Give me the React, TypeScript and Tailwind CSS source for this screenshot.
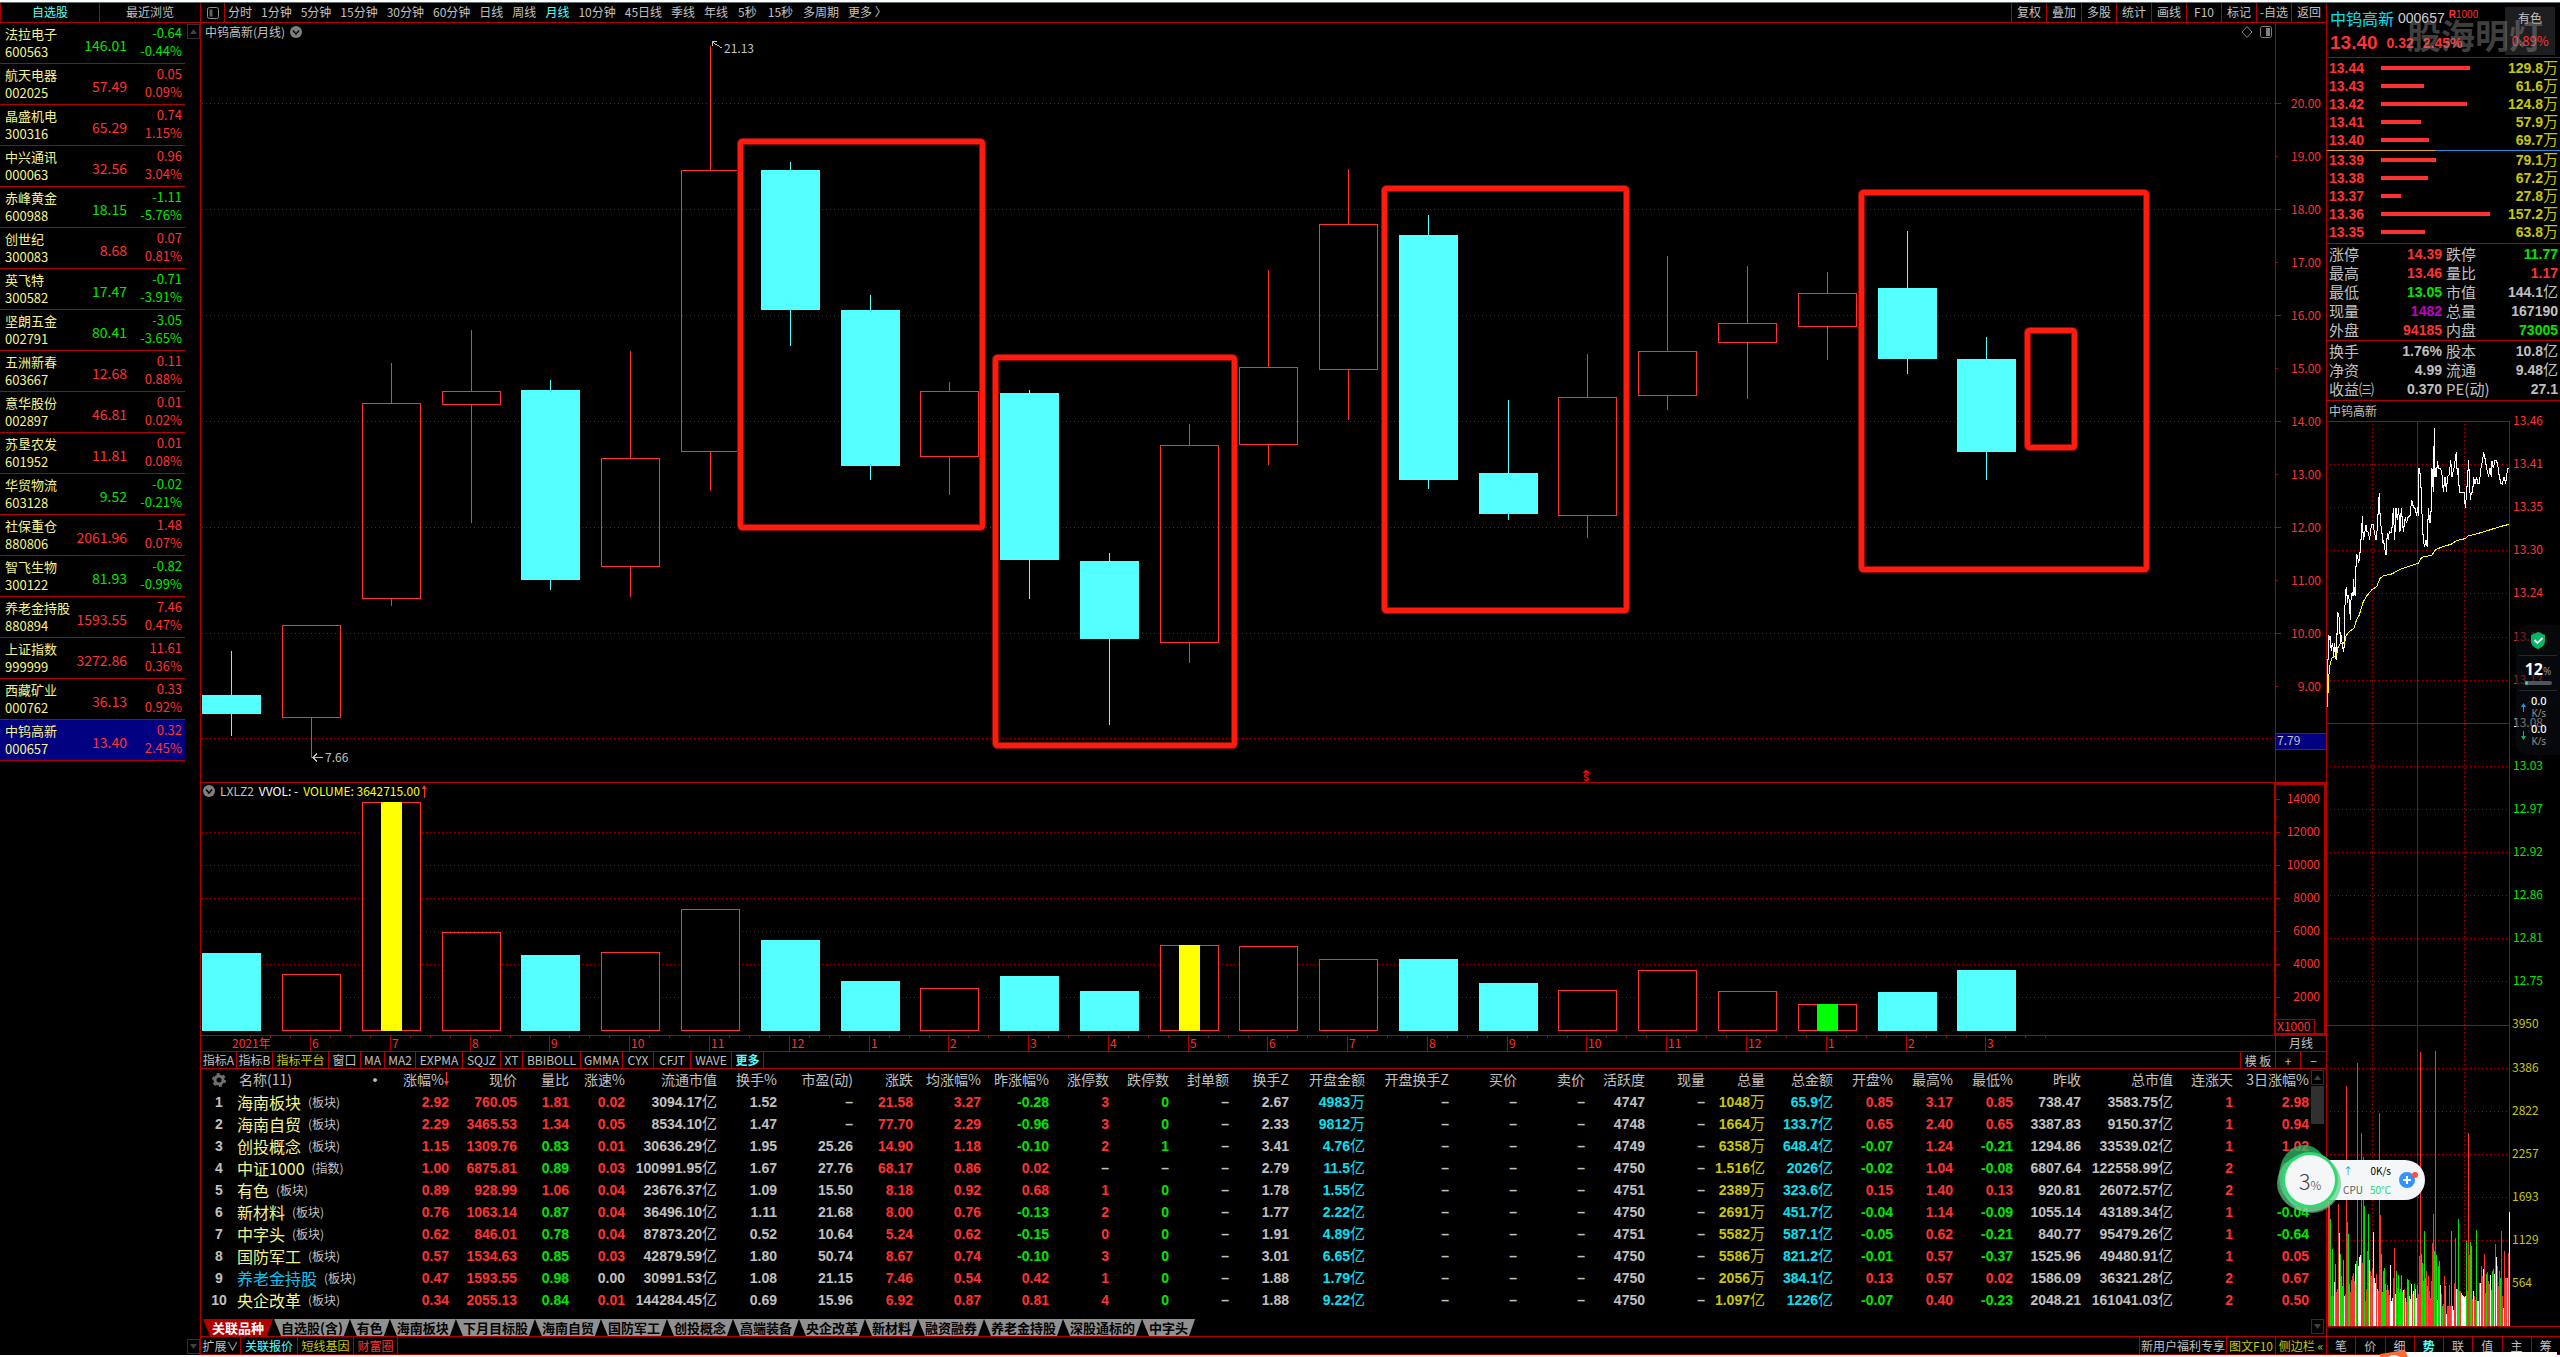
import clsx from "clsx";

const watchlist = [
  { name: "法拉电子", code: "600563", price: "146.01", change: "-0.64", percent: "-0.44%" },
  { name: "航天电器", code: "002025", price: "57.49", change: "0.05", percent: "0.09%" },
  { name: "晶盛机电", code: "300316", price: "65.29", change: "0.74", percent: "1.15%" },
  { name: "中兴通讯", code: "000063", price: "32.56", change: "0.96", percent: "3.04%" },
  { name: "赤峰黄金", code: "600988", price: "18.15", change: "-1.11", percent: "-5.76%" },
  { name: "创世纪", code: "300083", price: "8.68", change: "0.07", percent: "0.81%" },
  { name: "英飞特", code: "300582", price: "17.47", change: "-0.71", percent: "-3.91%" },
  { name: "坚朗五金", code: "002791", price: "80.41", change: "-3.05", percent: "-3.65%" },
  { name: "五洲新春", code: "603667", price: "12.68", change: "0.11", percent: "0.88%" },
  { name: "意华股份", code: "002897", price: "46.81", change: "0.01", percent: "0.02%" },
  { name: "苏垦农发", code: "601952", price: "11.81", change: "0.01", percent: "0.08%" },
  { name: "华贸物流", code: "603128", price: "9.52", change: "-0.02", percent: "-0.21%" },
  { name: "社保重仓", code: "880806", price: "2061.96", change: "1.48", percent: "0.07%" },
  { name: "智飞生物", code: "300122", price: "81.93", change: "-0.82", percent: "-0.99%" },
  { name: "养老金持股", code: "880894", price: "1593.55", change: "7.46", percent: "0.47%" },
  { name: "上证指数", code: "999999", price: "3272.86", change: "11.61", percent: "0.36%" },
  { name: "西藏矿业", code: "000762", price: "36.13", change: "0.33", percent: "0.92%" },
  { name: "中钨高新", code: "000657", price: "13.40", change: "0.32", percent: "2.45%" },
];

const periods = [
  "分时", "1分钟", "5分钟", "15分钟", "30分钟", "60分钟", "日线", "周线", "月线",
  "10分钟", "45日线", "季线", "年线", "5秒", "15秒", "多周期", "更多 〉",
];

const tools = ["复权", "叠加", "多股", "统计", "画线", "F10", "标记", "-自选", "返回"];

// [high, body top, body bottom, low, volume top], all in plot pixels
const candles: { up: boolean; k: number[]; vol: number; core?: string }[] = [
  { up: false, k: [628, 672, 691, 713], vol: 170 },
  { up: true, k: [602, 602, 695, 735], vol: 191 },
  { up: true, k: [340, 380, 576, 583], vol: 19, core: "#ffff00" },
  { up: true, k: [307, 368, 382, 500], vol: 149 },
  { up: false, k: [357, 367, 557, 567], vol: 172 },
  { up: true, k: [328, 435, 544, 574], vol: 169 },
  { up: true, k: [23, 147, 429, 468], vol: 126 },
  { up: false, k: [139, 147, 287, 323], vol: 157 },
  { up: false, k: [272, 287, 443, 457], vol: 198 },
  { up: true, k: [359, 368, 434, 472], vol: 205 },
  { up: false, k: [367, 370, 537, 576], vol: 193 },
  { up: false, k: [530, 538, 616, 702], vol: 208 },
  { up: true, k: [401, 422, 620, 640], vol: 162, core: "#ffff00" },
  { up: true, k: [247, 344, 422, 442], vol: 163 },
  { up: true, k: [146, 201, 347, 397], vol: 176 },
  { up: false, k: [192, 212, 457, 466], vol: 176 },
  { up: false, k: [377, 450, 491, 497], vol: 200 },
  { up: true, k: [331, 374, 493, 515], vol: 207 },
  { up: true, k: [233, 328, 373, 387], vol: 187 },
  { up: true, k: [243, 300, 320, 376], vol: 208 },
  { up: true, k: [249, 270, 304, 337], vol: 221, core: "#00ff00" },
  { up: false, k: [208, 265, 336, 351], vol: 209 },
  { up: false, k: [314, 336, 429, 457], vol: 187 },
];

const months = ["2021年", "6", "7", "8", "9", "10", "11", "12", "1", "2", "3", "4", "5", "6", "7", "8", "9", "10", "11", "12", "1", "2", "3"];

const marks = [
  { x: 539, y: 118, w: 242, h: 386 },
  { x: 794, y: 334, w: 239, h: 388 },
  { x: 1183, y: 165, w: 242, h: 422 },
  { x: 1660, y: 169, w: 285, h: 377 },
  { x: 1826, y: 307, w: 47, h: 117 },
];

const indicators = [
  { label: "指标A", width: "w-[36px]" },
  { label: "指标B", width: "w-[36px]" },
  { label: "指标平台", width: "w-[56px]", tone: "text-[#c8c800]" },
  { label: "窗口", width: "w-[32px]" },
  { label: "MA", width: "w-[24px]" },
  { label: "MA2", width: "w-[31px]" },
  { label: "EXPMA", width: "w-[47px]" },
  { label: "SQJZ", width: "w-[38px]" },
  { label: "XT", width: "w-[22px]" },
  { label: "BBIBOLL", width: "w-[58px]" },
  { label: "GMMA", width: "w-[42px]" },
  { label: "CYX", width: "w-[31px]" },
  { label: "CFJT", width: "w-[37px]" },
  { label: "WAVE", width: "w-[41px]" },
  { label: "更多", width: "w-[32px]", tone: "text-[#54ffff] font-bold" },
];

type Tone = "up" | "down" | "sign" | "ratio" | "plain" | "volume" | "amount";

const columns: { title: string; width: number; tone: Tone }[] = [
  { title: "涨幅%", width: 59, tone: "up" },
  { title: "现价", width: 68, tone: "up" },
  { title: "量比", width: 52, tone: "ratio" },
  { title: "涨速%", width: 56, tone: "sign" },
  { title: "流通市值", width: 92, tone: "plain" },
  { title: "换手%", width: 60, tone: "plain" },
  { title: "市盈(动)", width: 76, tone: "plain" },
  { title: "涨跌", width: 60, tone: "up" },
  { title: "均涨幅%", width: 68, tone: "up" },
  { title: "昨涨幅%", width: 68, tone: "sign" },
  { title: "涨停数", width: 60, tone: "up" },
  { title: "跌停数", width: 60, tone: "down" },
  { title: "封单额", width: 60, tone: "plain" },
  { title: "换手Z", width: 60, tone: "plain" },
  { title: "开盘金额", width: 76, tone: "amount" },
  { title: "开盘换手Z", width: 84, tone: "plain" },
  { title: "买价", width: 68, tone: "plain" },
  { title: "卖价", width: 68, tone: "plain" },
  { title: "活跃度", width: 60, tone: "plain" },
  { title: "现量", width: 60, tone: "plain" },
  { title: "总量", width: 60, tone: "volume" },
  { title: "总金额", width: 68, tone: "amount" },
  { title: "开盘%", width: 60, tone: "sign" },
  { title: "最高%", width: 60, tone: "sign" },
  { title: "最低%", width: 60, tone: "sign" },
  { title: "昨收", width: 68, tone: "plain" },
  { title: "总市值", width: 92, tone: "plain" },
  { title: "连涨天", width: 60, tone: "up" },
  { title: "3日涨幅%", width: 76, tone: "sign" },
];

const boards = [
  { name: "海南板块", kind: "板块", values: "2.92 760.05 1.81 0.02 3094.17亿 1.52 – 21.58 3.27 -0.28 3 0 – 2.67 4983万 – – – 4747 – 1048万 65.9亿 0.85 3.17 0.85 738.47 3583.75亿 1 2.98" },
  { name: "海南自贸", kind: "板块", values: "2.29 3465.53 1.34 0.05 8534.10亿 1.47 – 77.70 2.29 -0.96 3 0 – 2.33 9812万 – – – 4748 – 1664万 133.7亿 0.65 2.40 0.65 3387.83 9150.37亿 1 0.94" },
  { name: "创投概念", kind: "板块", values: "1.15 1309.76 0.83 0.01 30636.29亿 1.95 25.26 14.90 1.18 -0.10 2 1 – 3.41 4.76亿 – – – 4749 – 6358万 648.4亿 -0.07 1.24 -0.21 1294.86 33539.02亿 1 1.02" },
  { name: "中证1000", kind: "指数", values: "1.00 6875.81 0.89 0.03 100991.95亿 1.67 27.76 68.17 0.86 0.02 – – – 2.79 11.5亿 – – – 4750 – 1.516亿 2026亿 -0.02 1.04 -0.08 6807.64 122558.99亿 2 0.38" },
  { name: "有色", kind: "板块", values: "0.89 928.99 1.06 0.04 23676.37亿 1.09 15.50 8.18 0.92 0.68 1 0 – 1.78 1.55亿 – – – 4751 – 2389万 323.6亿 0.15 1.40 0.13 920.81 26072.57亿 2 0.42" },
  { name: "新材料", kind: "板块", values: "0.76 1063.14 0.87 0.04 36496.10亿 1.11 21.68 8.00 0.76 -0.13 2 0 – 1.77 2.22亿 – – – 4750 – 2691万 451.7亿 -0.04 1.14 -0.09 1055.14 43189.34亿 1 -0.04" },
  { name: "中字头", kind: "板块", values: "0.62 846.01 0.78 0.04 87873.20亿 0.52 10.64 5.24 0.62 -0.15 0 0 – 1.91 4.89亿 – – – 4751 – 5582万 587.1亿 -0.05 0.62 -0.21 840.77 95479.26亿 1 -0.64" },
  { name: "国防军工", kind: "板块", values: "0.57 1534.63 0.85 0.03 42879.59亿 1.80 50.74 8.67 0.74 -0.10 3 0 – 3.01 6.65亿 – – – 4750 – 5586万 821.2亿 -0.01 0.57 -0.37 1525.96 49480.91亿 1 0.05" },
  { name: "养老金持股", kind: "板块", values: "0.47 1593.55 0.98 0.00 30991.53亿 1.08 21.15 7.46 0.54 0.42 1 0 – 1.88 1.79亿 – – – 4750 – 2056万 384.1亿 0.13 0.57 0.02 1586.09 36321.28亿 2 0.67" },
  { name: "央企改革", kind: "板块", values: "0.34 2055.13 0.84 0.01 144284.45亿 0.69 15.96 6.92 0.87 0.81 4 0 – 1.88 9.22亿 – – – 4750 – 1.097亿 1226亿 -0.07 0.40 -0.23 2048.21 161041.03亿 2 0.50" },
];

const boardTabs = ["关联品种", "自选股(含)", "有色", "海南板块", "下月目标股", "海南自贸", "国防军工", "创投概念", "高端装备", "央企改革", "新材料", "融资融券", "养老金持股", "深股通标的", "中字头"];

const asks = [
  { price: "13.44", size: 89, amount: "129.8万" },
  { price: "13.43", size: 43, amount: "61.6万" },
  { price: "13.42", size: 86, amount: "124.8万" },
  { price: "13.41", size: 40, amount: "57.9万" },
  { price: "13.40", size: 48, amount: "69.7万" },
];

const bids = [
  { price: "13.39", size: 55, amount: "79.1万" },
  { price: "13.38", size: 47, amount: "67.2万" },
  { price: "13.37", size: 20, amount: "27.8万" },
  { price: "13.36", size: 109, amount: "157.2万" },
  { price: "13.35", size: 44, amount: "63.8万" },
];

const stats = [
  { label: "涨停", value: "14.39", tone: "text-[#ff3232]" },
  { label: "跌停", value: "11.77", tone: "text-[#00e600]" },
  { label: "最高", value: "13.46", tone: "text-[#ff3232]" },
  { label: "量比", value: "1.17", tone: "text-[#ff3232]" },
  { label: "最低", value: "13.05", tone: "text-[#00e600]" },
  { label: "市值", value: "144.1亿", tone: "text-[#c0c0c0]" },
  { label: "现量", value: "1482", tone: "text-[#c000c0]" },
  { label: "总量", value: "167190", tone: "text-[#c0c0c0]" },
  { label: "外盘", value: "94185", tone: "text-[#ff3232]" },
  { label: "内盘", value: "73005", tone: "text-[#00e600]" },
];

const fundamentals = [
  { label: "换手", value: "1.76%", tone: "text-[#c0c0c0]" },
  { label: "股本", value: "10.8亿", tone: "text-[#c0c0c0]" },
  { label: "净资", value: "4.99", tone: "text-[#c0c0c0]" },
  { label: "流通", value: "9.48亿", tone: "text-[#c0c0c0]" },
  { label: "收益㈢", value: "0.370", tone: "text-[#c0c0c0]" },
  { label: "PE(动)", value: "27.1", tone: "text-[#c0c0c0]" },
];

const intradayLabels = ["13.46", "13.41", "13.35", "13.30", "13.24", "13.19", "13.13", "13.08", "13.03", "12.97", "12.92", "12.86", "12.81", "12.75", "3950", "3386", "2822", "2257", "1693", "1129", "564"];

const priceLine =
  "382,905 383,820 386,705 389,720 390,708 394,752 397,728 399,740 401,768 404,730 406,778 408,740 410,780 412,635 416,645 419,660 421,730 424,705 427,735 431,755 434,720 434,640 437,572 440,562 442,610 444,585 448,600 451,660 453,600 457,575 459,588 461,538 463,580 466,585 468,500 470,465 473,468 476,490 480,460 482,430 485,400 487,348 490,420 494,400 498,375 501,395 505,397 509,420 511,398 515,373 519,373 523,395 528,420 531,395 534,345 538,278 541,370 545,385 548,430 551,420 553,440 558,465 562,400 565,420 568,395 575,398 580,325 584,420 588,325 592,360 596,325 600,395 604,325 610,395 616,350 619,370 625,350 630,348 635,300 640,320 645,325 650,348 653,320 655,348 657,205 662,230 665,320 670,420 674,442 678,420 682,442 685,325 690,370 694,325 696,205 700,277 703,85 705,230 708,205 710,230 712,182 716,205 722,205 727,230 730,277 735,230 740,277 742,230 748,225 752,180 756,230 762,205 769,157 772,225 775,205 778,277 793,277 796,325 800,277 803,230 806,180 811,300 814,277 818,277 821,230 825,252 830,230 833,250 838,250 843,205 848,180 851,157 856,180 860,205 866,230 870,205 874,230 876,182 880,205 885,182 890,182 895,205 898,230 903,250 907,252 912,230 917,252 920,225 924,205 928,205";
const averageLine =
  "382,920 385,860 388,805 395,775 410,765 413,745 420,732 434,728 437,710 445,697 462,685 470,658 478,645 490,605 500,588 515,570 530,560 540,535 550,528 575,522 600,508 655,490 665,472 695,466 708,448 730,440 755,432 770,422 795,416 805,408 850,396 900,380 928,373";

// one bar per minute: colour letter + height
const minuteVolume =
  "r125 r120 g107 r30 g77 r30 w44 g62 r34 r37 r122 w93 g72 g50 g40 g66 w30 r32 r240 r104 g92 g42 r34 r46 r50 r53 r45 w62 g65 r263 w60 w69 w71 r193 r63 r169 g120 r25 r37 r75 g112 w66 r55 g50 r58 w94 w48 w43 r52 w37 r35 r213 r111 g72 g34 g55 g58 g42 r36 g41 r36 g31 w61 w25 w28 r48 r78 w32 g55 r38 g51 g33 g37 g51 g34 w36 r37 w28 r24 g47 g46 w30 w27 w42 r32 w35 g42 w37 w28 g41 r32 r70 r274 g72 g63 r45 g95 g48 r55 g40 r50 r35 r28 r45 r83 r112 g75 r275 g71 w26 g60 g65 w41 r32 g20 r22 r50 g40 w12 r20 r20 r41 r20 g95 w20 w16 r42 r88 w37 g37 g107 g35 r35 w33 w31 w30 w29 w30 g85 r35 r193 r71 g84 g80 r27 w35 r30 r26 g96 w25 w25 g43 w43 r60 r50 w57 r72 r33 g52 r54 r45 r42 w51 g36 g55 r57 w52 r82 w69 r60 r40 r55 g48 r95 r30 w18 r75 g48 r48 w48 r73 w114".split(" ");

const barColors: Record<string, string> = { r: "#ff3232", g: "#00e600", w: "#ffffff" };

const sideTabs = ["笔", "价", "细", "势", "联", "值", "主", "筹"];

function toneClass(tone: Tone, value: string) {
  const n = parseFloat(value);
  if (value === "–" || tone === "plain") return "text-[#c0c0c0]";
  if (tone === "volume") return "text-[#c8c800]";
  if (tone === "amount") return "text-[#02e2f4]";
  if (tone === "down") return "text-[#00e600]";
  if (tone === "ratio") return n >= 1 ? "text-[#ff3232]" : "text-[#00e600]";
  if (tone === "sign" && n === 0) return "text-[#c0c0c0]";
  return n < 0 ? "text-[#00e600]" : "text-[#ff3232]";
}

function Num({ value }: { value: string }) {
  const unit = /[万亿]$/.test(value) ? value.slice(-1) : "";
  return (
    <span className="block font-['Liberation_Sans','Noto_Sans_CJK_SC',sans-serif] text-[14px] leading-[16px] font-bold whitespace-nowrap">
      {unit ? value.slice(0, -1) : value}
      {unit && <span className="text-[15px] leading-none font-normal">{unit}</span>}
    </span>
  );
}

function ScrollArrow({ down = false }: { down?: boolean }) {
  return (
    <button
      aria-label={down ? "向下" : "向上"}
      className="flex h-[15px] w-[13px] shrink-0 items-center justify-center border border-[#303030]"
    >
      <svg width="7" height="5" fill="#404040">
        <path d={down ? "M0 0h7L3.5 5z" : "M0 5h7L3.5 0z"} />
      </svg>
    </button>
  );
}

function Watchlist() {
  return (
    <aside className="flex w-[201px] shrink-0 flex-col border-r border-[#b00000]">
      <div className="flex h-[20px] shrink-0 border-b border-l border-[#b00000] text-[12px] leading-[17px]">
        <button className="w-[98px] pb-[2px] text-[#54ffff]">自选股</button>
        <button className="flex-1 border-l border-[#b00000] pb-[2px] text-[#c0c0c0]">最近浏览</button>
      </div>
      <div className="flex flex-1 gap-[2px]">
        <ul className="w-[186px] text-[13px] leading-[18px]">
          {watchlist.map((s) => {
            const color = s.change.startsWith("-") ? "text-[#00e600]" : "text-[#ff3232]";
            return (
              <li
                key={s.code}
                className={clsx(
                  "grid h-[41px] grid-cols-[71px_51px_55px] border-b border-[#b00000] pl-[5px] whitespace-nowrap",
                  s.code === "000657" && "bg-[#000080]",
                )}
              >
                <div className="pt-[2px] text-[#f4f48c]">
                  <div>{s.name}</div>
                  <div>{s.code}</div>
                </div>
                <div className={clsx("flex items-center justify-end pt-[3px] text-[14px]", color)}>{s.price}</div>
                <div className={clsx("pt-px text-right", color)}>
                  <div>{s.change}</div>
                  <div>{s.percent}</div>
                </div>
              </li>
            );
          })}
        </ul>
        <div className="flex flex-col justify-between py-px">
          <ScrollArrow />
          <ScrollArrow down />
        </div>
      </div>
    </aside>
  );
}

function Toolbar() {
  return (
    <div className="flex h-[20px] shrink-0 items-stretch justify-between border-b border-[#b00000] text-[12px] leading-[17px] whitespace-nowrap text-[#c0c0c0]">
      <div className="flex">
        <button aria-label="布局" className="flex w-[24px] items-center justify-center border-r border-[#b00000]">
          <svg width="12" height="12" fill="none" stroke="#909090">
            <rect x="0.5" y="0.5" width="11" height="11" rx="2" />
            <rect x="2.5" y="2.5" width="3" height="7" fill="#606060" stroke="none" />
          </svg>
        </button>
        <div className="flex gap-[9px] pb-[2px] pl-[3px]">
          {periods.map((p) => (
            <button key={p} className={clsx(p === "月线" && "text-[#54ffff]", /秒/.test(p) && "px-px")}>
              {p}
            </button>
          ))}
        </div>
      </div>
      <div className="flex">
        {tools.map((t) => (
          <button key={t} className="w-[35px] border-l border-[#b00000] pb-[2px]">
            {t}
          </button>
        ))}
      </div>
    </div>
  );
}

function FoldIcon() {
  return (
    <svg width="12" height="12" fill="none">
      <circle cx="6" cy="6" r="6" fill="#808080" />
      <path d="M3 4.5l3 3.5 3-3.5" stroke="#000" strokeWidth="1.5" />
    </svg>
  );
}

const centerOf = (i: number) => Math.round(30.4 + i * 79.77);

function PriceChart() {
  const priceY = (p: number) => 80.4 + (20 - p) * 52.92;
  return (
    <div className="flex h-[760px] border-b border-[#b00000]">
      <div className="relative min-w-0 flex-1 border-r border-[#b00000]">
        <svg className="h-full w-full overflow-visible text-[12px]" shapeRendering="crispEdges">
          {[20, 18, 16, 14, 12, 10, 8].map((p) => (
            <line key={p} x1="1" x2="100%" y1={Math.round(priceY(p)) + 0.5} y2={Math.round(priceY(p)) + 0.5} stroke="#b00000" strokeDasharray="1 3" />
          ))}
          {candles.map((c, i) => {
            const x = centerOf(i);
            const [high, top, bottom, low] = c.k;
            const color = c.up ? "#ff3232" : "#54ffff";
            return (
              <g key={i} stroke={color} fill={c.up ? "#000" : color}>
                <line x1={x + 0.5} x2={x + 0.5} y1={high} y2={top} />
                <line x1={x + 0.5} x2={x + 0.5} y1={bottom} y2={low} />
                <rect x={x - 28.5} y={top + 0.5} width="58" height={bottom - top - 1} />
              </g>
            );
          })}
          {/* dotted levels stay visible through hollow bodies */}
          {[20, 18, 16, 14, 12, 10].map((p) =>
            candles.map((c, i) =>
              c.up && priceY(p) > c.k[1] && priceY(p) < c.k[2] ? (
                <line key={`${p}-${i}`} x1={centerOf(i) - 28} x2={centerOf(i) + 29} y1={Math.round(priceY(p)) + 0.5} y2={Math.round(priceY(p)) + 0.5} stroke="#b00000" strokeDasharray="1 3" />
              ) : null,
            ),
          )}
          <g fill="none" stroke="#c0c0c0">
            <path d="M521 25l-10-6m5-1h-5v5M122 734.5h-10m4-4l-4 4 4 4" />
          </g>
          <text x="523" y="30" fill="#c0c0c0">21.13</text>
          <text x="124" y="739" fill="#c0c0c0">7.66</text>
          <path d="M1382 750l3-4 3 4z" fill="#ff0000" />
          <text x="1385" y="758" fill="#ff0000" fontWeight="bold" textAnchor="middle">s</text>
          {marks.map((m) => (
            <g key={m.x} fill="none" shapeRendering="auto">
              <rect x={m.x + 0.5} y={m.y + 0.5} width={m.w} height={m.h} rx="2" stroke="#8a0c06" strokeWidth="7" />
              <rect x={m.x + 0.5} y={m.y + 0.5} width={m.w} height={m.h} rx="2" stroke="#ff1c0f" strokeWidth="5" />
            </g>
          ))}
        </svg>
        <div className="absolute top-0 left-[4px] flex h-[18px] items-center gap-[5px] text-[12px] text-[#c0c0c0]">
          中钨高新(月线)
          <FoldIcon />
        </div>
        <div className="absolute top-[3px] right-[3px] flex items-center gap-[7px]">
          <svg width="12" height="12" fill="none" stroke="#808080">
            <path d="M6 0.5L11 6 6 11.5 1 6z" />
          </svg>
          <svg width="12" height="12" fill="none" stroke="#808080">
            <rect x="0.5" y="0.5" width="11" height="11" rx="2" />
            <rect x="6" y="2" width="4" height="8" fill="#808080" stroke="none" />
          </svg>
        </div>
      </div>
      <svg className="h-full w-[50px] text-[12px]" shapeRendering="crispEdges">
        {[20, 19, 18, 17, 16, 15, 14, 13, 12, 11, 10, 9].map((p) => (
          <g key={p}>
            <line x1="0" x2={p % 2 ? 2 : 5} y1={Math.round(priceY(p)) + 0.5} y2={Math.round(priceY(p)) + 0.5} stroke="#b00000" />
            <text x="45" y={Math.round(priceY(p)) + 5} fill="#ff3232" textAnchor="end">{p.toFixed(2)}</text>
          </g>
        ))}
        <rect x="-1" y="710.5" width="52" height="16" fill="#000080" stroke="#b00000" />
        <text x="1" y="722" fill="#c0c0c0">7.79</text>
      </svg>
    </div>
  );
}

function VolumeChart() {
  const levels = [14000, 12000, 10000, 8000, 6000, 4000, 2000];
  return (
    <div className="flex h-[253px] border-b border-[#b00000]">
      <div className="relative min-w-0 flex-1">
        <svg className="h-full w-full" shapeRendering="crispEdges">
          {levels.slice(1).map((v, i) => (
            <line key={v} x1="1" x2="100%" y1={49.5 + i * 33} y2={49.5 + i * 33} stroke="#b00000" strokeDasharray="1 3" />
          ))}
          {candles.map((c, i) => {
            const x = centerOf(i);
            const color = c.up ? "#ff3232" : "#54ffff";
            return (
              <g key={i}>
                <rect x={x - 28.5} y={c.vol + 0.5} width="58" height={247 - c.vol} fill={c.up ? "#000" : color} stroke={color} />
                {c.core && <rect x={x - 10} y={c.vol} width="21" height={248 - c.vol} fill={c.core} />}
              </g>
            );
          })}
        </svg>
        <div className="absolute top-0 left-[2px] flex h-[16px] items-center gap-[5px] text-[12px] text-[#c0c0c0]">
          <FoldIcon />
          <span>LXLZ2</span>
          <span className="text-white">VVOL: -</span>
          <span className="flex items-center gap-px text-[#ffff00]">
            VOLUME: 3642715.00
            <svg width="7" height="13" fill="#ff3232">
              <path d="M3 0l3 4H4v9H3V4H1z" />
            </svg>
          </span>
        </div>
      </div>
      <div className="flex w-[52px] border-2 border-[#b00000]">
        <svg className="h-full w-full overflow-visible text-[12px]" shapeRendering="crispEdges">
          {levels.map((v, i) => (
            <g key={v}>
              <line x1="0" x2="4" y1={14.5 + i * 33} y2={14.5 + i * 33} stroke="#b00000" />
              <line x1="0" x2="1" y1={31.5 + i * 33} y2={31.5 + i * 33} stroke="#b00000" />
              <text x="44" y={18 + i * 33} fill="#ff3232" textAnchor="end">{v}</text>
            </g>
          ))}
          <path d="M0 234.500H38.500V248" fill="none" stroke="#b00000" />
          <text x="1" y="246" fill="#ff3232">X1000</text>
        </svg>
      </div>
    </div>
  );
}

function MonthAxis() {
  return (
    <div className="flex h-[16px] border-b border-[#b00000]">
      <svg className="h-full min-w-0 flex-1 overflow-visible text-[12px]" shapeRendering="crispEdges">
        {months.map((m, i) => (
          <g key={i} stroke="#b00000">
            {i > 0 && <line x1={centerOf(i) - 0.5} x2={centerOf(i) - 0.5} y1="0" y2="16" />}
            {[20, 40, 60].map((d) => (
              <line key={d} x1={centerOf(i) + d - 0.5} x2={centerOf(i) + d - 0.5} y1="0" y2="2" />
            ))}
            <text x={centerOf(i) + 1} y="12" fill="#ff3232" stroke="none">{m}</text>
          </g>
        ))}
      </svg>
      <div className="w-[51px] border-l border-[#b00000] text-center text-[12px] leading-[14px] text-[#c0c0c0]">月线</div>
    </div>
  );
}

function IndicatorBar() {
  return (
    <div className="flex h-[17px] justify-between border-b border-[#b00000] text-[12px] leading-[15px] whitespace-nowrap text-[#c0c0c0]">
      <div className="flex">
        {indicators.map((t) => (
          <button key={t.label} className={clsx("flex justify-center border-r border-[#b00000]", t.width, t.tone)}>
            {t.label}
          </button>
        ))}
      </div>
      <div className="flex">
        <button className="w-[35px] border-l border-[#b00000]">模 板</button>
        <button className="w-[25px] border-l border-[#b00000]">+</button>
        <button className="w-[26px] border-l border-[#b00000]">−</button>
      </div>
    </div>
  );
}

function BoardTable() {
  return (
    <div className="flex">
      <div className="min-w-0 flex-1 pr-[2px] pb-[8px]">
        <table className="w-full table-fixed border-collapse whitespace-nowrap">
          <colgroup>
            <col className="w-[36px]" />
            <col className="w-[153px]" />
            {columns.map((c) => (
              <col key={c.title} style={{ width: c.width }} />
            ))}
          </colgroup>
          <thead>
            <tr className="h-[22px] text-[14px] leading-[16px] text-[#c0c0c0]">
              <th aria-label="设置">
                <svg className="mx-auto" width="14" height="14" viewBox="0 0 14 14" fill="none">
                  <circle cx="7" cy="7" r="4" stroke="#707070" strokeWidth="3" />
                  <circle cx="7" cy="7" r="6" stroke="#707070" strokeWidth="2" strokeDasharray="3 3.28" />
                </svg>
              </th>
              <th className="pb-[2px] text-left font-normal">
                <div className="flex justify-between pr-[6px] pl-[2px]">
                  <span>名称(11)</span>
                  <span className="text-[18px]">·</span>
                </div>
              </th>
              {columns.map((c, i) => (
                <th key={c.title} className="pb-[2px] text-right font-normal">
                  <div className="flex items-center justify-end">
                    {c.title}
                    {i === 0 && (
                      <svg width="5" height="14" fill="#ff3232">
                        <path d="M2 0h1v9h2l-2.5 5L0 9h2z" />
                      </svg>
                    )}
                  </div>
                </th>
              ))}
            </tr>
          </thead>
          <tbody>
            {boards.map((b, row) => (
              <tr key={b.name} className="h-[22px]">
                <td className="text-center text-[#c0c0c0]">
                  <Num value={String(row + 1)} />
                </td>
                <td>
                  <div className="flex h-[20px] items-center gap-[7px] leading-[20px]">
                    <span className={clsx("text-[16px]", b.name === "养老金持股" ? "text-[#02c8f4]" : "text-[#f4f48c]")}>{b.name}</span>
                    <span className="text-[12px] text-[#c0c0c0]">({b.kind})</span>
                  </div>
                </td>
                {b.values.split(" ").map((v, i) => (
                  <td key={i} className={clsx("text-right", toneClass(columns[i].tone, v))}>
                    <Num value={v} />
                  </td>
                ))}
              </tr>
            ))}
          </tbody>
        </table>
      </div>
      <div className="flex w-[15px] flex-col pt-px">
        <ScrollArrow />
        <div className="mt-px h-[38px] w-[13px] bg-[#303030]" />
        <div className="flex-1" />
        <div className="flex h-0 flex-col">
          <ScrollArrow down />
        </div>
      </div>
    </div>
  );
}

function BoardTabs() {
  return (
    <div className="flex h-[18px] border-b border-[#b00000] pl-[2px]">
      {boardTabs.map((t, i) => (
        <button
          key={t}
          className={clsx(
            "px-[7px] text-[13px] leading-[17px] font-bold whitespace-nowrap [clip-path:polygon(0_0,100%_0,calc(100%-6px)_100%,7px_100%)]",
            i === 0 ? "mr-px bg-[#b00000] pr-[9px] pl-[9px] text-white" : "bg-[#909090] text-black",
          )}
        >
          {t}
        </button>
      ))}
    </div>
  );
}

function BottomBar() {
  return (
    <div className="flex h-[18px] justify-between border-b border-[#b00000] text-[12px] leading-[17px] whitespace-nowrap">
      <div className="flex">
        <button className="w-[40px] border-r border-[#b00000] text-[#c0c0c0]">扩展∨</button>
        <button className="w-[57px] border-r border-[#b00000] text-[#54ffff]">关联报价</button>
        <button className="w-[56px] border-r border-[#b00000] text-[#c8c800]">短线基因</button>
        <button className="w-[44px] border-r border-[#b00000] text-[#ff3232]">财富圈</button>
      </div>
      <div className="flex">
        <button className="w-[87px] border-l border-[#b00000] text-[#c0c0c0]">新用户福利专享</button>
        <button className="w-[49px] border-l border-[#b00000] text-[#c8c800]">图文F10</button>
        <button className="w-[51px] border-l border-[#b00000] text-[#c8c800]">侧边栏 «</button>
      </div>
    </div>
  );
}

function OrderRows({ rows }: { rows: typeof asks }) {
  return (
    <tbody>
      {rows.map((r) => (
        <tr key={r.price} className="h-[18px]">
          <td className="w-[54px] pl-[2px] text-[#ff3232]">
            <Num value={r.price} />
          </td>
          <td>
            <div className="h-[4px] bg-[#ff3232]" style={{ width: r.size }} />
          </td>
          <td className="pr-[2px] text-right text-[#c8c800]">
            <Num value={r.amount} />
          </td>
        </tr>
      ))}
    </tbody>
  );
}

function StatGrid({ items }: { items: typeof stats }) {
  return (
    <dl className="grid grid-cols-[113px_1fr] gap-x-[4px] pr-[2px] pl-[2px]">
      {items.map((s) => (
        <div key={s.label} className="flex h-[19px] items-center justify-between leading-[16px] whitespace-nowrap">
          <dt className="text-[15px] text-[#c0c0c0]">{s.label}</dt>
          <dd className={s.tone}>
            <Num value={s.value} />
          </dd>
        </div>
      ))}
    </dl>
  );
}

function IntradayChart() {
  return (
    <svg className="h-[915px] w-full overflow-visible text-[12px]" shapeRendering="crispEdges">
      <g stroke="#b00000" fill="none">
        <path d="M0 0.5H183M0 302.5H183M0 604.5H183M0 905.5H233M90.5 0V905M182.5 0V905" />
        <path d="M45.5 3V905M137.5 3V905" strokeDasharray="1 3" />
        {intradayLabels.map((l, i) =>
          i % 7 ? <line key={l} x1="3" x2="182" y1={Math.round(i * 43.1) + 0.5} y2={Math.round(i * 43.1) + 0.5} strokeDasharray="1 3" /> : null,
        )}
      </g>
      {intradayLabels.map((l, i) => (
        <text
          key={l}
          x={i < 14 ? 186 : 185}
          y={Math.round(i * 43.1) + 4}
          fill={i < 7 ? "#ff3232" : i === 7 ? "#ffffff" : i < 14 ? "#00e600" : "#c8c800"}
        >
          {l}
        </text>
      ))}
      {minuteVolume.map((bar, i) => (
        <rect key={i} x={i + 1} y={905 - Number(bar.slice(1))} width="1" height={bar.slice(1)} fill={barColors[bar[0]]} />
      ))}
      <g transform="translate(-127 -21) scale(0.3333)" fill="none" strokeWidth="3.1">
        <polyline points={priceLine} stroke="#ffffff" />
        <polyline points={averageLine} stroke="#ffff00" />
      </g>
    </svg>
  );
}

function QuotePanel() {
  return (
    <aside className="relative flex w-[234px] shrink-0 flex-col border-l border-[#b00000]">
      <div className="flex h-[55px] justify-between border-b border-[#b00000] pt-[4px] pr-[5px] pl-[3px]">
        <div className="whitespace-nowrap">
          <div className="flex h-[22px] items-center gap-[4px]">
            <span className="text-[16px] leading-[20px] text-[#02e2f4]">中钨高新</span>
            <span className="font-['Liberation_Sans',sans-serif] text-[14px] text-[#d0d0d0]">000657</span>
            <span className="self-start font-['Liberation_Sans',sans-serif] text-[10px] leading-[16px] text-[#ff3232]">
              <b>R</b>1000
            </span>
          </div>
          <div className="flex h-[28px] items-center gap-[9px] font-['Liberation_Sans',sans-serif] text-[14px] font-bold text-[#ff3232]">
            <span className="text-[19px]">13.40</span>
            <span>0.32</span>
            <span>2.45%</span>
          </div>
        </div>
        <div className="h-[48px] w-[50px] bg-[#1e1e20] text-center">
          <div className="text-[12px] leading-[22px] text-[#c0c0c0]">有色</div>
          <div className="text-[13px] leading-[24px] text-[#ff3232]">0.89%</div>
        </div>
      </div>
      <div className="pointer-events-none absolute top-[9px] left-[80px] text-[34px] leading-[46px] font-bold whitespace-nowrap text-[#909090]/45">
        股海明灯
      </div>

      <table className="mt-px w-full">
        <OrderRows rows={asks} />
      </table>
      <div className="mt-px flex h-px">
        <div className="w-[109px] bg-[#e0a030]" />
        <div className="flex-1 bg-[#3090e0]" />
      </div>
      <div className="border-b border-[#b00000] pb-[2px]">
        <table className="w-full">
          <OrderRows rows={bids} />
        </table>
      </div>
      <div className="border-b border-[#b00000] pb-px">
        <StatGrid items={stats} />
      </div>
      <div className="border-b border-[#b00000] pb-[2px]">
        <StatGrid items={fundamentals} />
      </div>
      <div className="h-[20px] pl-[2px] text-[12px] leading-[19px] text-[#c0c0c0]">中钨高新</div>
      <IntradayChart />
      <div className="flex h-[19px] border-y border-[#b00000] text-[12px] leading-[17px] text-[#c0c0c0]">
        {sideTabs.map((t) => (
          <button key={t} className={clsx("flex-1 border-r border-[#b00000] last:border-r-0", t === "势" && "font-bold text-[#54ffff]")}>
            {t}
          </button>
        ))}
      </div>

      <MonitorDock />
      <SpeedBall />
      <div className="absolute right-[3px] bottom-[-2px] h-[5px] w-[157px] bg-white">
        <svg className="absolute bottom-0 left-[-20px]" width="28" height="7">
          <path d="M0 4L25 0l3 7H0z" fill="#ff6a35" />
          <path d="M8 7q6-4 12 0z" fill="#fff" />
        </svg>
      </div>
    </aside>
  );
}

function MonitorDock() {
  return (
    <div className="absolute top-[622px] right-0 flex h-[130px] w-[44px] flex-col items-center rounded-l-[12px] bg-[#0c0e14]/60 font-['Noto_Sans',sans-serif]">
      <div className="flex h-[30px] items-center">
        <svg width="14" height="17" viewBox="0 0 14 17" fill="none">
          <path d="M7 0l7 3v6c0 4-3 6.500-7 8-4-1.500-7-4-7-8V3z" fill="#00b865" />
          <path d="M3.500 8l3 3 5-5" stroke="#fff" strokeWidth="1.800" />
        </svg>
      </div>
      <div className="flex h-[36px] w-[38px] flex-col items-center border-y border-[#202a30] pt-[3px]">
        <div className="text-[16px] leading-[20px] font-bold whitespace-nowrap text-white">
          12<span className="text-[10px] font-normal text-[#909090]">%</span>
        </div>
        <div className="h-[4px] w-[27px] rounded-full bg-[#50545c]">
          <div className="h-full w-[3px] rounded-full bg-[#30c8b0]" />
        </div>
      </div>
      {["#1a9ae8", "#10b060"].map((c, i) => (
        <div key={c} className="flex h-[28px] w-full items-center gap-[5px] pt-[4px] pl-[5px]">
          <svg width="5" height="9" fill={c}>
            <path d={i ? "M2 0h1v5h2L2.500 9 0 5h2z" : "M2 9h1V4h2L2.500 0 0 4h2z"} />
          </svg>
          <div className="text-center">
            <div className="text-[11px] leading-[12px] font-medium text-white">0.0</div>
            <div className="text-[10px] leading-[12px] text-[#909090]">K/s</div>
          </div>
        </div>
      ))}
    </div>
  );
}

function SpeedBall() {
  return (
    <div className="absolute top-[1141px] left-[-51px] h-[72px] w-[150px]">
      <div className="absolute top-[16px] left-[32px] flex h-[40px] w-[117px] items-center justify-end gap-[7px] rounded-r-full bg-[#f5f6f7] pr-[7px]">
        <div className="w-[48px] text-[10px] leading-[19px] whitespace-nowrap">
          <div className="flex justify-between text-black">
            <span className="text-[#2a90f5]">↑</span>
            <span>0K/s</span>
          </div>
          <div className="flex justify-between text-[#606060]">
            CPU <span className="text-[#20d870]">50℃</span>
          </div>
        </div>
        <svg width="20" height="20" fill="none">
          <circle cx="9" cy="10" r="8" fill="#3094ff" />
          <path d="M5 10h8M9 6v8" stroke="#fff" strokeWidth="2" />
          <circle cx="17" cy="5" r="3" fill="#ff5030" />
        </svg>
      </div>
      <svg className="absolute top-0 left-0" width="72" height="72">
        <ellipse cx="28" cy="32" rx="25" ry="31" fill="#2fbf68" fillOpacity="0.75" />
        <ellipse cx="33" cy="39" rx="32" ry="29" fill="#5fd08c" fillOpacity="0.7" />
        <ellipse cx="36" cy="42" rx="28" ry="27" fill="#7be0a0" fillOpacity="0.5" />
        <circle cx="34" cy="36" r="28" fill="#30d870" />
        <circle cx="34" cy="36" r="25" fill="#f5f6f7" />
      </svg>
      <div className="absolute top-[20px] left-[9px] w-[50px] text-center text-[22px] leading-[32px] font-light text-[#404040]">
        3<span className="text-[12px]">%</span>
      </div>
    </div>
  );
}

export default function App() {
  return (
    <div className="min-h-screen bg-black font-['Noto_Sans_CJK_SC',sans-serif]">
      <div className="h-[3px] border-b border-[#607070] bg-white" />
      <div className="flex">
        <Watchlist />
        <main className="flex min-w-0 flex-1 flex-col">
          <Toolbar />
          <PriceChart />
          <VolumeChart />
          <MonthAxis />
          <IndicatorBar />
          <BoardTable />
          <BoardTabs />
          <BottomBar />
        </main>
        <QuotePanel />
      </div>
      <div className="h-[2px] bg-white" />
    </div>
  );
}
